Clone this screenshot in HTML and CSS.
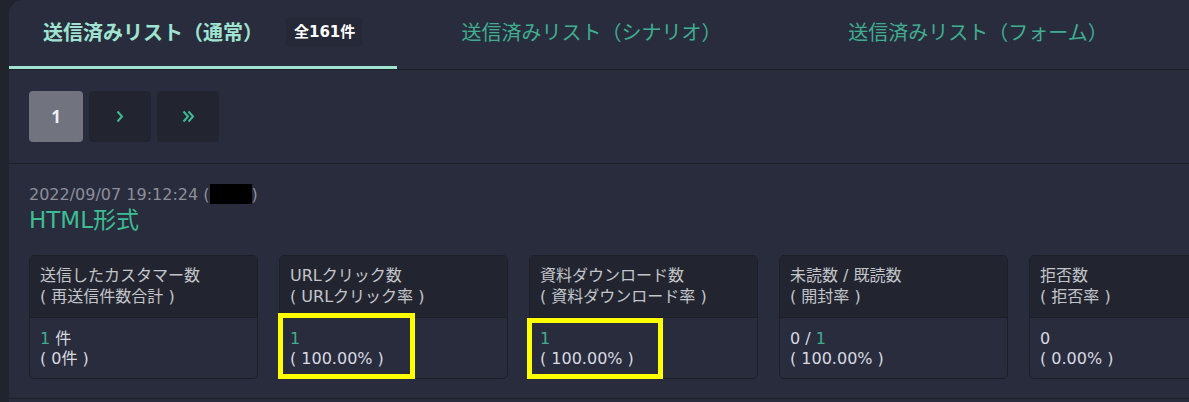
FILE: index.html
```html
<!DOCTYPE html>
<html lang="ja">
<head>
  <meta charset="UTF-8">
  <title>送信済みリスト</title>
  <link rel="stylesheet" href="styles.css">
</head>
<body>
  <div class="panel">
    <div class="tabs">
      <div class="tab active">
        <span>送信済みリスト（通常）</span>
        <span class="badge">全161件</span>
      </div>
      <div class="tab"><span>送信済みリスト（シナリオ）</span></div>
      <div class="tab"><span>送信済みリスト（フォーム）</span></div>
    </div>

    <div class="pager">
      <button class="page current">1</button>
      <button class="page arrow">
        <svg width="8" height="13" viewBox="0 0 8 13"><polyline points="1.5,1.5 6,6.5 1.5,11.5" fill="none" stroke="currentColor" stroke-width="2"/></svg>
      </button>
      <button class="page arrow">
        <svg width="13" height="13" viewBox="0 0 13 13"><polyline points="1.5,1.5 6,6.5 1.5,11.5" fill="none" stroke="currentColor" stroke-width="2"/><polyline points="6.5,1.5 11,6.5 6.5,11.5" fill="none" stroke="currentColor" stroke-width="2"/></svg>
      </button>
    </div>

    <div class="entry">
      <div class="date">2022/09/07 19:12:24 (<span class="redact"></span>)</div>
      <div class="format">HTML形式</div>

      <div class="cards">
        <div class="card">
          <div class="card-head">送信したカスタマー数<br>( 再送信件数合計 )</div>
          <div class="card-body"><span class="num">1</span> 件<br>( 0件 )</div>
        </div>
        <div class="card">
          <div class="card-head">URLクリック数<br>( URLクリック率 )</div>
          <div class="card-body"><span class="num">1</span><br>( 100.00% )</div>
          <div class="mark mark-a"></div>
        </div>
        <div class="card">
          <div class="card-head">資料ダウンロード数<br>( 資料ダウンロード率 )</div>
          <div class="card-body"><span class="num">1</span><br>( 100.00% )</div>
          <div class="mark mark-b"></div>
        </div>
        <div class="card">
          <div class="card-head">未読数 / 既読数<br>( 開封率 )</div>
          <div class="card-body">0 / <span class="num">1</span><br>( 100.00% )</div>
        </div>
        <div class="card">
          <div class="card-head">拒否数<br>( 拒否率 )</div>
          <div class="card-body">0<br>( 0.00% )</div>
        </div>
      </div>
    </div>
  </div>
</body>
</html>
```

FILE: styles.css
```css
body {
  margin: 0;
  padding: 0 0 0 9px;
  background: #21232d;
  font-family: 'DejaVu Sans', 'Noto Sans CJK JP', sans-serif;
  overflow: hidden;
}

.panel {
  background: #292c3d;
  border-top-left-radius: 14px;
  width: 1300px;
  height: 402px;
}

.tabs {
  display: grid;
  grid-template-columns: 388px 389px 384px;
  height: 70px;
  border-bottom: 1px solid #1e2029;
  box-sizing: border-box;
}

.tab {
  display: flex;
  align-items: center;
  justify-content: center;
  font-family: 'Noto Sans CJK JP', sans-serif;
  font-size: 20px;
  color: #3fae8f;
  padding-bottom: 6px;
  box-sizing: border-box;
}

.tab.active {
  justify-content: flex-start;
  gap: 23px;
  padding-left: 34px;
  color: #9fe3d0;
  font-weight: 700;
  border-bottom: 3px solid #9fe3d0;
  padding-bottom: 3px;
}

.badge {
  background: #252836;
  color: #fff;
  font-family: 'DejaVu Sans', 'Noto Sans CJK JP', sans-serif;
  font-size: 15px;
  font-weight: 700;
  padding: 0 7px 0 8px;
  height: 28px;
  line-height: 28px;
  border-radius: 2px;
}

.pager {
  display: flex;
  gap: 6px;
  padding: 21px 20px;
  border-bottom: 1px solid #1e2029;
}

.page {
  display: flex;
  align-items: center;
  justify-content: center;
  width: 62px;
  height: 51px;
  border: none;
  border-radius: 4px;
  background: #22252f;
  color: #3dbd93;
  font-family: 'Noto Sans', sans-serif;
  padding: 0;
}

.page.current {
  width: 54px;
  background: #71737f;
  color: #eef0f4;
  font-size: 17px;
  font-weight: 700;
}

.entry {
  padding: 20px 20px 19px;
  border-bottom: 1px solid #1e2029;
}

.date {
  font-size: 16px;
  color: #8d8f99;
  line-height: 20px;
}

.redact {
  display: inline-block;
  width: 42px;
  height: 20px;
  background: #000;
  vertical-align: -4px;
}

.format {
  font-size: 23px;
  color: #3dbd93;
  line-height: 26px;
  margin-top: 2px;
}

.cards {
  display: flex;
  gap: 21px;
  margin-top: 22px;
}

.card {
  position: relative;
  width: 227px;
  flex-shrink: 0;
  border: 1px solid #1d1f28;
  border-radius: 5px;
  font-size: 16px;
  line-height: 21px;
}

.card-head {
  background: #22252f;
  color: #c3c5cb;
  padding: 9px 10px 10px;
  border-bottom: 1px solid #1d1f28;
  border-radius: 5px 5px 0 0;
}

.card-body {
  color: #d8dae0;
  padding: 11px 10px 9px;
  line-height: 20px;
}

.num {
  color: #3fae8f;
}

.mark {
  position: absolute;
  border: 5px solid #ffff00;
  box-sizing: border-box;
}

.mark-a {
  left: -2px;
  top: 57px;
  width: 137px;
  height: 66px;
}

.mark-b {
  left: -3px;
  top: 62px;
  width: 136px;
  height: 61px;
}
```
